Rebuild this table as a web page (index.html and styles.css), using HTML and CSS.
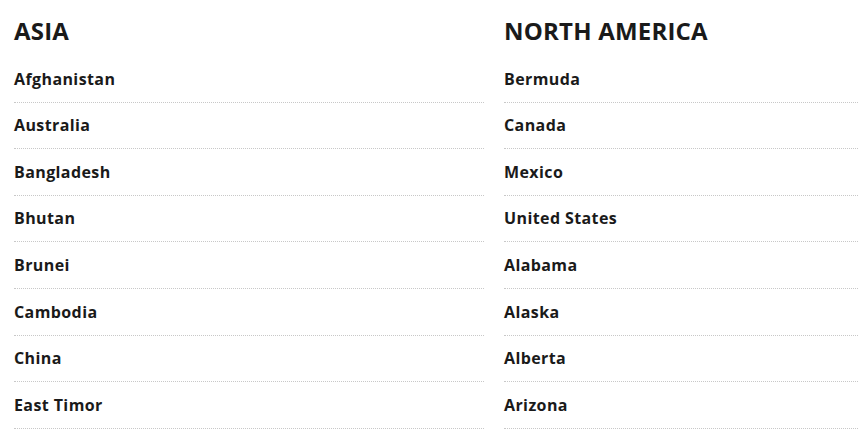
FILE: index.html
```html
<!DOCTYPE html>
<html lang="en">
<head>
<meta charset="utf-8">
<title>Regions</title>
<link rel="stylesheet" href="styles.css">
</head>
<body>
<div class="regions">
  <section class="region">
    <h2 class="region-title">ASIA</h2>
    <ul class="country-list">
      <li class="country">Afghanistan</li>
      <li class="country">Australia</li>
      <li class="country">Bangladesh</li>
      <li class="country">Bhutan</li>
      <li class="country">Brunei</li>
      <li class="country">Cambodia</li>
      <li class="country">China</li>
      <li class="country">East Timor</li>
    </ul>
  </section>
  <section class="region">
    <h2 class="region-title">NORTH AMERICA</h2>
    <ul class="country-list">
      <li class="country">Bermuda</li>
      <li class="country">Canada</li>
      <li class="country">Mexico</li>
      <li class="country">United States</li>
      <li class="country">Alabama</li>
      <li class="country">Alaska</li>
      <li class="country">Alberta</li>
      <li class="country">Arizona</li>
    </ul>
  </section>
</div>
</body>
</html>
```
FILE: styles.css
```css
html, body {
  margin: 0;
  padding: 0;
  background: #ffffff;
}

body {
  font-family: "Open Sans", "DejaVu Sans", sans-serif;
  color: #1a1a1a;
  overflow: hidden;
}

.regions {
  display: grid;
  grid-template-columns: 470px 1fr;
  column-gap: 20px;
  padding: 0 2px 0 14px;
}

.region-title {
  margin: 0;
  padding-top: 15px;
  padding-bottom: 10px;
  font-size: 24px;
  line-height: 31px;
  font-weight: 700;
  letter-spacing: 0.2px;
}

.country-list {
  list-style: none;
  margin: 0;
  padding: 0;
}

.country {
  font-size: 16px;
  line-height: 24px;
  font-weight: 700;
  letter-spacing: 0.4px;
  padding: 10.6px 0 11px;
  border-bottom: 1px dotted #c8c8c8;
}
```
